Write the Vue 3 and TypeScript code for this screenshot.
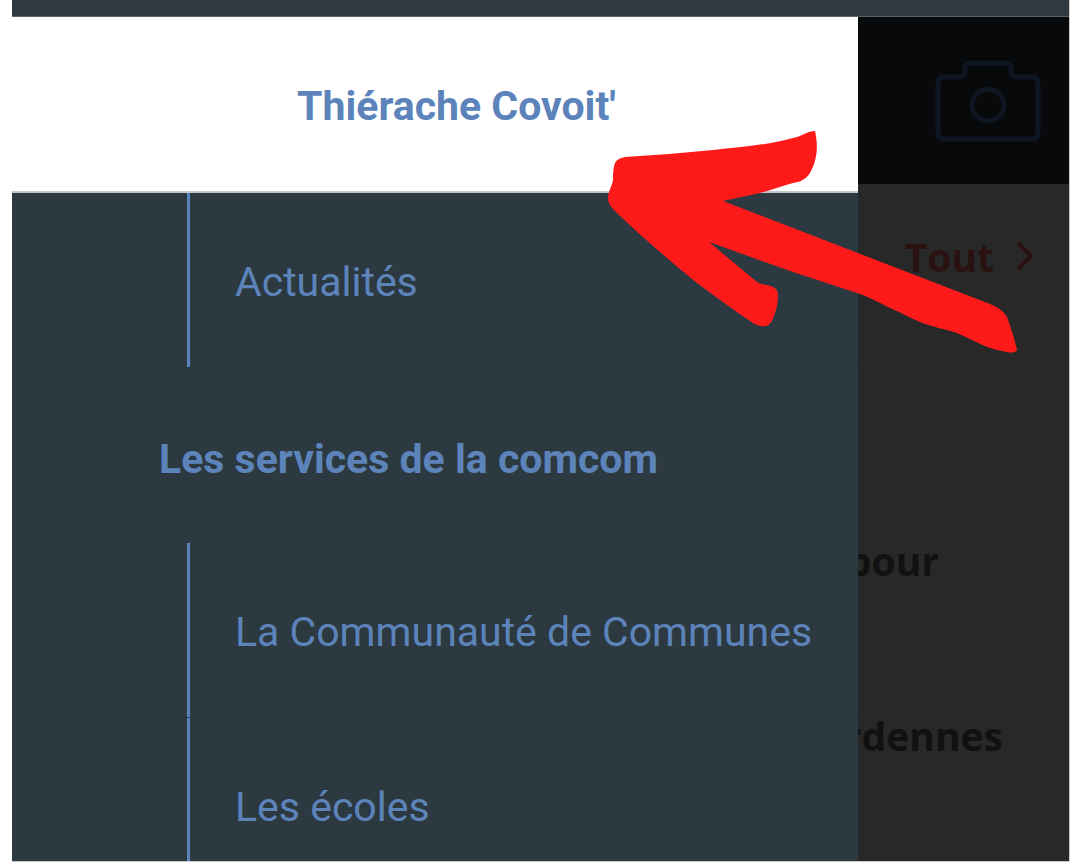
<script setup lang="ts">
const services = ["La Communauté de Communes", "Les écoles"]
</script>

<template>
  <div class="frame">
    <div class="statusbar"></div>
    <div class="screen">
      <div class="page">
        <header class="appbar">
          <svg class="camera" width="106" height="83" viewBox="0 0 106 83" fill="none">
            <path d="M9 17H24Q30 17 30 11V9Q30 3 36 3H70Q76 3 76 9V11Q76 17 82 17H97Q103 17 103 23V73Q103 79 97 79H9Q3 79 3 73V23Q3 17 9 17Z" />
            <circle cx="53" cy="45" r="16" />
          </svg>
        </header>
        <div class="content">
          <div class="more">
            <span>Tout</span>
            <svg width="22" height="32" viewBox="0 0 22 32" fill="none"><path d="M4 3L17 16L4 29" /></svg>
          </div>
          <p class="line line-first">pour</p>
          <p class="line line-second">Ardennes</p>
        </div>
      </div>

      <nav class="drawer">
        <div class="drawer-head">Thiérache Covoit'</div>
        <a class="item"><span>Actualités</span></a>
        <div class="section">Les services de la comcom</div>
        <a v-for="name in services" :key="name" class="item"><span>{{ name }}</span></a>
      </nav>

      <svg class="arrow" width="1080" height="864" viewBox="0 0 1080 864">
        <path d="M815 131C818 145 818 158 810 173C805 180 800 182 793 183C782 186 771 190 760 193C748 196 735 198 723 201L990 304C998 307 1003 311 1007 317C1011 328 1015 340 1017 350C1015 353 1011 353 1007 352C1000 351 994 349 987 347L957 333C945 329 932 327 920 322C910 318 900 312 890 308C881 303 872 299 863 295L793 272L709 242L757 282C762 285 768 285 773 287C777 289 778 292 778 295C778 302 777 307 775 313C773 320 770 326 765 326C761 327 757 325 753 323C735 311 716 297 697 283C670 261 643 238 617 213C612 208 608 204 608 198C608 192 612 186 613 180C613 174 613 168 615 163C617 159 621 158 625 157C654 155 684 153 713 150C741 147 769 145 797 137C803 135 809 131 815 131Z" />
      </svg>
    </div>
  </div>
</template>

<style>
html, body {
  margin: 0;
  background: #fff;
}
</style>

<style scoped>
.frame {
  width: 1057px;
  height: 861px;
  margin-left: 12px;
  border-right: 1px solid #c9c9c9;
  border-bottom: 1px solid #c9c9c9;
  display: flex;
  flex-direction: column;
  overflow: hidden;
  font-family: Roboto, "Liberation Sans", sans-serif;
}
.statusbar {
  height: 17px;
  flex: none;
  background: #2f3a42;
  border-bottom: 1px solid #59636a;
  box-sizing: border-box;
}
.screen {
  position: relative;
  flex: 1;
  min-height: 0;
}
.page {
  height: 100%;
  display: flex;
  flex-direction: column;
  background: #282828;
}
.appbar {
  height: 167px;
  flex: none;
  background: #08090b;
  display: flex;
  justify-content: flex-end;
  align-items: flex-start;
  padding: 43px 28px 0 0;
  box-sizing: border-box;
}
.camera path, .camera circle {
  stroke: #0e1721;
  stroke-width: 5;
}
.content {
  flex: 1;
  font-family: "Open Sans", sans-serif;
  font-weight: 700;
  font-size: 39px;
  color: #111;
}
.more {
  display: flex;
  justify-content: flex-end;
  align-items: center;
  gap: 20px;
  height: 50px;
  margin-top: 47px;
  padding-right: 33px;
  color: #2a1210;
}
.more path {
  stroke: #2a1210;
  stroke-width: 4;
}
.line {
  margin: 0;
  line-height: 50px;
  text-align: right;
}
.line-first {
  margin-top: 255px;
  padding-right: 130px;
}
.line-second {
  margin-top: 125px;
  padding-right: 66px;
}
.drawer {
  position: absolute;
  left: 0;
  top: 0;
  bottom: 0;
  width: 846px;
  background: #2d3941;
  color: #5c84ba;
  font-size: 41px;
  overflow: hidden;
}
.drawer-head {
  height: 176px;
  box-sizing: border-box;
  background: #fff;
  border-bottom: 2px solid #c4c6c9;
  display: flex;
  align-items: center;
  justify-content: center;
  padding: 4px 0 0 43px;
  font-weight: 700;
  font-size: 41px;
}
.item {
  display: block;
  height: 175px;
  box-sizing: border-box;
  padding-left: 175px;
  border-bottom: 1px solid #29343c;
}
.item span {
  display: flex;
  align-items: center;
  height: 100%;
  box-sizing: border-box;
  padding: 3px 0 0 45px;
  border-left: 3px solid #5c84ba;
  white-space: nowrap;
}
.section {
  height: 175px;
  box-sizing: border-box;
  display: flex;
  align-items: center;
  padding: 6px 0 0 147px;
  font-weight: 700;
}
.arrow {
  position: absolute;
  left: -12px;
  top: -17px;
  pointer-events: none;
}
.arrow path {
  fill: #ff1a1a;
}
</style>
